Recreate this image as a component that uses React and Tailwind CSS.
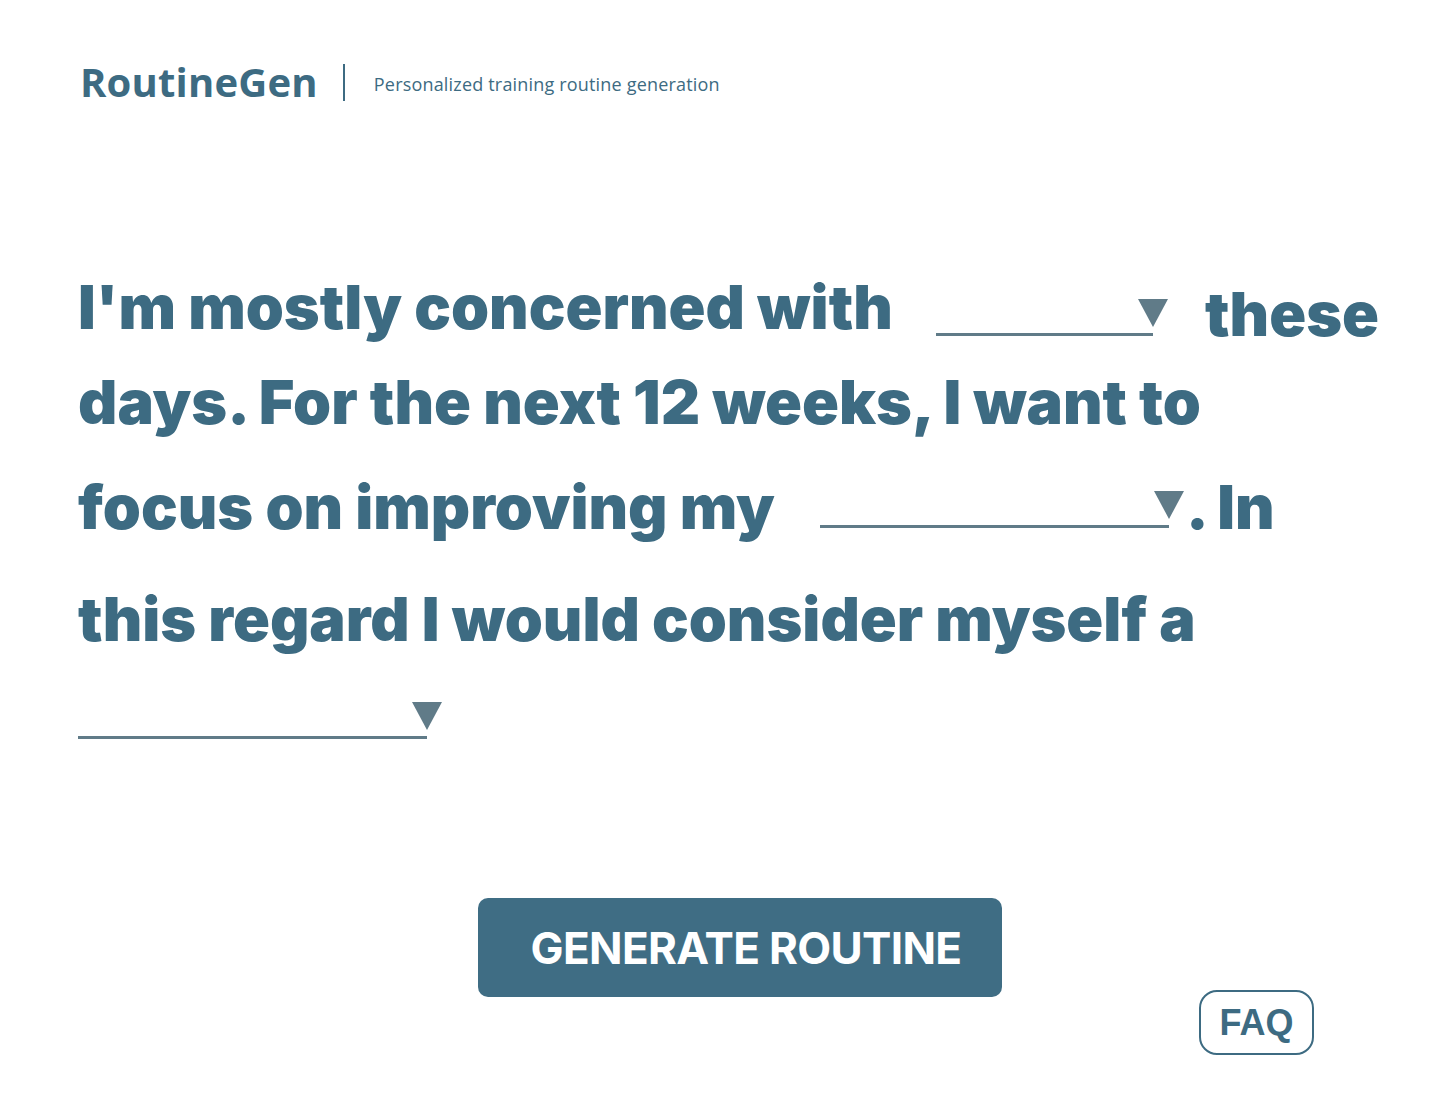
import { useState } from "react";

const heading = "font-['Inter',sans-serif] font-black text-[61px] tracking-normal text-[#3d6b82]";

// blank + arrow, looks like an underlined select
function Blank({ className }) {
  return (
    <span className={`relative inline-block align-baseline h-[40px] border-b-[3px] border-[#607b88] ${className}`}>
      <span className="absolute right-[-15px] bottom-[6px] w-0 h-0 border-l-[15px] border-r-[15px] border-t-[28px] border-l-transparent border-r-transparent border-t-[#607b88]" />
    </span>
  );
}

export default function App() {
  const [hover, setHover] = useState(false);

  return (
    <div className="relative min-h-screen bg-white font-['Open_Sans',sans-serif]">
      {/* HEADER */}
      <header className="flex items-center pl-[80px] pt-[62px]">
        <span className="text-[40px] font-bold leading-none tracking-[0.005em] text-[#3d6b82]">RoutineGen</span>
        <span className="ml-[25px] mr-[29px] w-[2px] h-[37px] bg-[#3d6b82]" />
        <span className="text-[18px] tracking-[0.01em] text-[#3d6b82] pt-[4px]">Personalized training routine generation</span>
      </header>

      {/* FORM SENTENCE */}
      <div className={`${heading} pl-[78px] mt-[158px] whitespace-nowrap`}>
        <div className="h-[95px] leading-[95px]">
          {"I'm mostly concerned with"}
          <Blank className="w-[217px] ml-[43px] mb-[-7px]" />
          <span className="ml-[52px] align-[-7px]">these</span>
        </div>
        <div className="h-[105px] leading-[95px]">days. For the next 12 weeks, I want to</div>
        <div className="h-[112px] leading-[95px]">
          {"focus on improving my"}
          <Blank className="w-[349px] ml-[45px] mb-[1px]" />
          <span className="ml-[17px]">. In</span>
        </div>
        <div className="h-[96px] leading-[95px]">this regard I would consider myself a</div>
        <div className="h-[95px] leading-[95px]">
          <Blank className="w-[349px] mb-[-2px]" />
        </div>
      </div>

      {/* BUTTON */}
      <div className="ml-[78px] w-[1324px] flex justify-center mt-[135px]">
        <button
          onMouseEnter={() => setHover(true)}
          onMouseLeave={() => setHover(false)}
          className={`w-[524px] h-[99px] pl-[12px] rounded-[10px] ${hover ? "bg-[#355e73]" : "bg-[#3f6d84]"} text-white font-['Inter',sans-serif] font-bold text-[44px] tracking-[-0.015em]`}
        >
          GENERATE ROUTINE
        </button>
      </div>

      {/* FAQ */}
      <button className="absolute right-[126px] top-[990px] w-[115px] h-[65px] rounded-[18px] border-2 border-[#3d6b82] text-[#3d6b82] font-['Liberation_Sans',sans-serif] font-bold text-[36px] leading-none">
        FAQ
      </button>
    </div>
  );
}
